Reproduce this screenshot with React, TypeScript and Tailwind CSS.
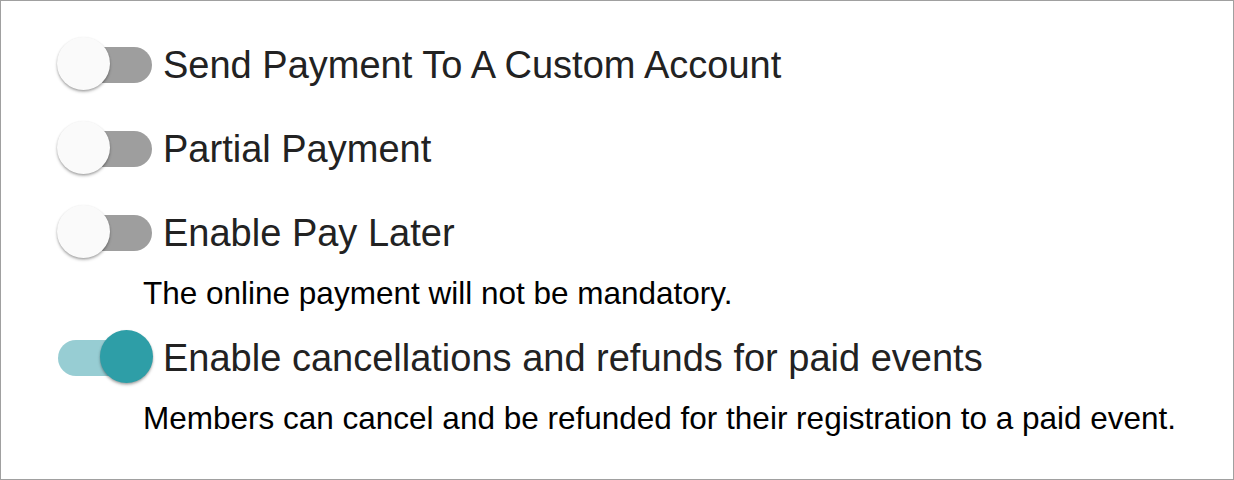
import React from "react";

function Toggle({ on }: { on: boolean }) {
  return (
    <div className="relative w-[94px] h-[55px] shrink-0 flex items-center">
      <div
        className={
          on
            ? "w-[94px] h-[36px] rounded-full bg-[#97cdd3]"
            : "w-[94px] h-[36px] rounded-full bg-[#9e9e9e]"
        }
      />
      <div
        className={
          on
            ? "absolute top-0 left-[42px] w-[53px] h-[53px] rounded-full bg-[#2e9ea7] shadow-[0_2px_3px_rgba(0,0,0,0.25),0_1px_2px_rgba(0,0,0,0.15)]"
            : "absolute top-0 left-[-1px] w-[53px] h-[53px] rounded-full bg-[#fafafa] shadow-[0_2px_3px_rgba(0,0,0,0.25),0_1px_2px_rgba(0,0,0,0.15)]"
        }
      />
    </div>
  );
}

function Row({ on, label }: { on: boolean; label: string }) {
  return (
    <div className="flex items-center gap-[11px] h-[55px]">
      <Toggle on={on} />
      <span className="text-[38px] leading-none text-[#222222]">{label}</span>
    </div>
  );
}

export default function App() {
  return (
    <div
      className="w-[1234px] h-[480px] border border-[#a0a0a0] bg-white"
      style={{ fontFamily: '"Liberation Sans", Arial, sans-serif' }}
    >
      <div className="pl-[57px] pt-[36px] flex flex-col">
        <Row on={false} label="Send Payment To A Custom Account" />
        <div className="h-[29px]" />
        <Row on={false} label="Partial Payment" />
        <div className="h-[29px]" />
        <Row on={false} label="Enable Pay Later" />
        <div className="pl-[85px] pt-[15px] text-[31.5px] leading-[36px] text-black">
          The online payment will not be mandatory.
        </div>
        <div className="h-[19px]" />
        <Row on={true} label="Enable cancellations and refunds for paid events" />
        <div className="pl-[85px] pt-[15px] text-[31.5px] leading-[36px] text-black">
          Members can cancel and be refunded for their registration to a paid event.
        </div>
      </div>
    </div>
  );
}
